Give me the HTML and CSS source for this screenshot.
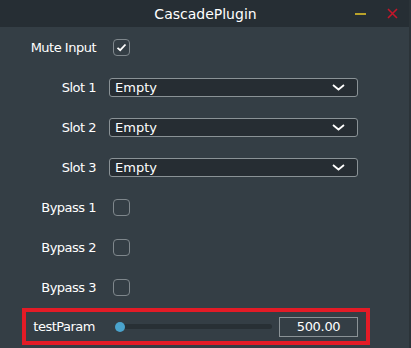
FILE: index.html
```html
<!DOCTYPE html>
<html lang="en">

<head>
  <meta charset="UTF-8" />
  <title>CascadePlugin</title>
  <link rel="stylesheet" href="styles.css">
</head>

<body>
  <div class="window">
    <div class="titlebar">
      <div class="title">CascadePlugin</div>
      <div class="title-buttons">
        <span class="btn-min"></span>
        <svg class="btn-close" width="11" height="11" viewBox="0 0 11 11">
          <path d="M1 1 L10 10 M10 1 L1 10" stroke="#c4162a" stroke-width="1.6" fill="none" />
        </svg>
      </div>
    </div>

    <div class="content">
      <div class="row">
        <label>Mute Input</label>
        <span class="check checked">
          <svg width="11" height="9" viewBox="0 0 11 9">
            <path d="M1.5 4.8 L4.2 7.2 L9.5 1.5" stroke="#ffffff" stroke-width="1.8" fill="none" />
          </svg>
        </span>
      </div>

      <div class="row">
        <label>Slot 1</label>
        <div class="combo">
          <span>Empty</span>
          <svg width="13" height="7" viewBox="0 0 13 7">
            <path d="M1 1 L6.5 5.5 L12 1" stroke="#ffffff" stroke-width="1.8" fill="none" />
          </svg>
        </div>
      </div>

      <div class="row">
        <label>Slot 2</label>
        <div class="combo">
          <span>Empty</span>
          <svg width="13" height="7" viewBox="0 0 13 7">
            <path d="M1 1 L6.5 5.5 L12 1" stroke="#ffffff" stroke-width="1.8" fill="none" />
          </svg>
        </div>
      </div>

      <div class="row">
        <label>Slot 3</label>
        <div class="combo">
          <span>Empty</span>
          <svg width="13" height="7" viewBox="0 0 13 7">
            <path d="M1 1 L6.5 5.5 L12 1" stroke="#ffffff" stroke-width="1.8" fill="none" />
          </svg>
        </div>
      </div>

      <div class="row">
        <label>Bypass 1</label>
        <span class="check"></span>
      </div>

      <div class="row">
        <label>Bypass 2</label>
        <span class="check"></span>
      </div>

      <div class="row">
        <label>Bypass 3</label>
        <span class="check"></span>
      </div>

      <div class="param-row">
        <label>testParam</label>
        <div class="slider">
          <div class="track"></div>
          <div class="thumb"></div>
        </div>
        <div class="value">500.00</div>
      </div>
    </div>
  </div>
</body>

</html>
```

FILE: styles.css
```css
body {
  margin: 0;
  background-color: #2b3338;
  font-family: "DejaVu Sans", Verdana, sans-serif;
  color: #ffffff;
}

.window {
  width: 409px;
  height: 348px;
  background-color: #343e45;
}

.titlebar {
  height: 27px;
  background-color: #262e34;
  display: flex;
  align-items: center;
  justify-content: center;
  position: relative;
}

.title {
  font-size: 14px;
  margin-left: 2px;
}

.title-buttons {
  position: absolute;
  right: 11px;
  top: 8px;
  display: flex;
  align-items: center;
  gap: 21px;
}

.btn-min {
  display: block;
  width: 11px;
  height: 2px;
  background-color: #b9a22a;
}

.btn-close {
  display: block;
}

.content {
  display: flex;
  flex-direction: column;
}

.row {
  height: 40px;
  display: grid;
  grid-template-columns: 96px 1fr;
  column-gap: 13px;
  align-items: center;
  font-size: 13px;
}

.row label,
.param-row label {
  text-align: right;
  letter-spacing: -0.5px;
}

.check {
  width: 17px;
  height: 17px;
  box-sizing: border-box;
  border: 1.5px solid #7f878c;
  border-radius: 4px;
  margin-left: 4px;
  display: flex;
  align-items: center;
  justify-content: center;
}

.combo {
  width: 249px;
  height: 19px;
  box-sizing: border-box;
  background-color: #262d33;
  border: 1px solid #8a9296;
  border-radius: 3px;
  display: flex;
  align-items: center;
  justify-content: space-between;
  padding: 0 12px 0 5px;
  font-size: 13px;
}

.param-row {
  margin: 1px 0 0 22px;
  width: 348px;
  height: 37px;
  box-sizing: border-box;
  border: 4px solid #e31b26;
  display: flex;
  align-items: center;
  font-size: 13px;
}

.param-row label {
  width: 69px;
}

.slider {
  position: relative;
  width: 157px;
  height: 10px;
  margin-left: 20px;
}

.track {
  position: absolute;
  left: 5px;
  right: 0;
  top: 2px;
  height: 5px;
  border-radius: 3px;
  background-color: #283035;
}

.thumb {
  position: absolute;
  left: 0;
  top: 0;
  width: 10px;
  height: 10px;
  border-radius: 50%;
  background-color: #4aa3cc;
}

.value {
  margin-left: 7px;
  width: 79px;
  height: 20px;
  box-sizing: border-box;
  border: 1px solid #8a9296;
  display: flex;
  align-items: center;
  justify-content: center;
  letter-spacing: -0.3px;
}
```
